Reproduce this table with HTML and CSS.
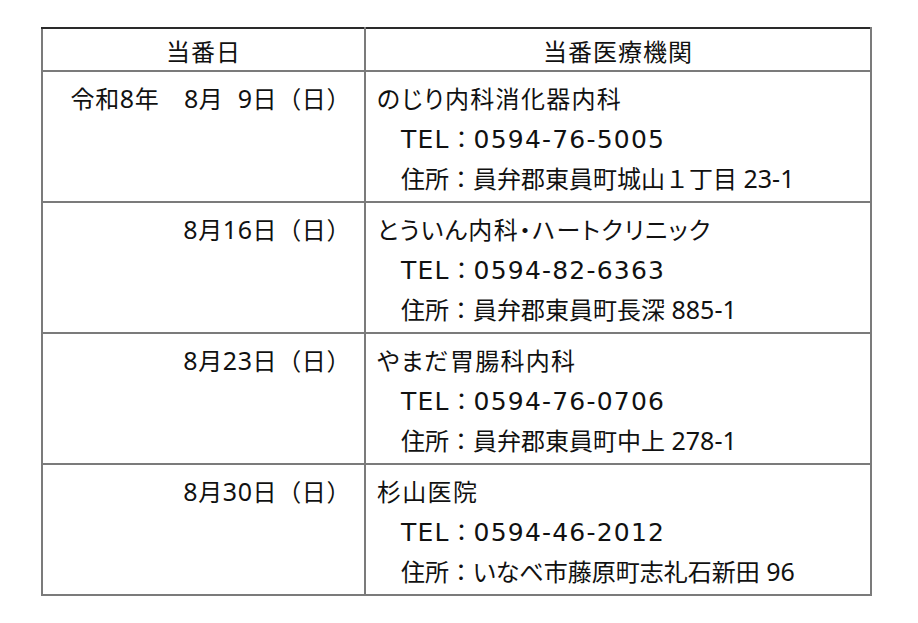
FILE: index.html
```html
<!DOCTYPE html>
<html lang="ja">
<head>
<meta charset="utf-8">
<title>当番医療機関</title>
<link rel="stylesheet" href="styles.css">
</head>
<body>
<table class="schedule">
  <colgroup>
    <col class="col-date">
    <col class="col-info">
  </colgroup>
  <thead>
    <tr>
      <th>当番日</th>
      <th>当番医療機関</th>
    </tr>
  </thead>
  <tbody>
    <tr>
      <td class="date">令和<span class="lat">8</span>年<span class="fw">　</span><span class="lat">8</span>月<span class="lat">&nbsp;&nbsp;9</span>日<span class="fw">（</span>日<span class="fw">）</span></td>
      <td class="info">
        <div class="name">のじり内科消化器内科</div>
        <div class="sub"><span class="lat tel">TEL</span><span class="fw">：</span><span class="lat tel">0594-76-5005</span></div>
        <div class="sub">住所<span class="fw">：</span>員弁郡東員町城山<span class="fw">１</span>丁目<span class="lat"> 23-1</span></div>
      </td>
    </tr>
    <tr>
      <td class="date"><span class="lat">8</span>月<span class="lat">16</span>日<span class="fw">（</span>日<span class="fw">）</span></td>
      <td class="info">
        <div class="name">とういん内科・ハートクリニック</div>
        <div class="sub"><span class="lat tel">TEL</span><span class="fw">：</span><span class="lat tel">0594-82-6363</span></div>
        <div class="sub">住所<span class="fw">：</span>員弁郡東員町長深<span class="lat"> 885-1</span></div>
      </td>
    </tr>
    <tr>
      <td class="date"><span class="lat">8</span>月<span class="lat">23</span>日<span class="fw">（</span>日<span class="fw">）</span></td>
      <td class="info">
        <div class="name">やまだ胃腸科内科</div>
        <div class="sub"><span class="lat tel">TEL</span><span class="fw">：</span><span class="lat tel">0594-76-0706</span></div>
        <div class="sub">住所<span class="fw">：</span>員弁郡東員町中上<span class="lat"> 278-1</span></div>
      </td>
    </tr>
    <tr>
      <td class="date"><span class="lat">8</span>月<span class="lat">30</span>日<span class="fw">（</span>日<span class="fw">）</span></td>
      <td class="info">
        <div class="name">杉山医院</div>
        <div class="sub"><span class="lat tel">TEL</span><span class="fw">：</span><span class="lat tel">0594-46-2012</span></div>
        <div class="sub">住所<span class="fw">：</span>いなべ市藤原町志礼石新田<span class="lat"> 96</span></div>
      </td>
    </tr>
  </tbody>
</table>
</body>
</html>
```

FILE: styles.css
```css
html, body {
  margin: 0;
  padding: 0;
  background: #ffffff;
}

body {
  font-family: "Noto Sans CJK JP", "Noto Sans", sans-serif;
  font-size: 24px;
  color: #111111;
}

.schedule {
  border-collapse: collapse;
  table-layout: fixed;
  width: 829px;
  margin: 27px 0 0 41px;
}

.col-date {
  width: 323px;
}

.col-info {
  width: 506px;
}

.schedule th,
.schedule td {
  border: 2px solid #7b7b7b;
  padding: 0;
  font-weight: normal;
}

.schedule thead th {
  border-top-color: #2a2a2a;
  height: 39px;
  padding-top: 2px;
  line-height: 38px;
  letter-spacing: 1px;
  text-align: center;
  vertical-align: middle;
}

.schedule td {
  vertical-align: top;
  line-height: 40px;
  height: 120px;
  font-feature-settings: "palt";
}

.date {
  text-align: right;
  padding: 6px 13px 3px 0 !important;
  white-space: nowrap;
  letter-spacing: 0.6px;
}

.info {
  padding: 6px 10px 3px 11px !important;
}

.name {
  letter-spacing: 1.3px;
  white-space: nowrap;
}

.sub {
  padding-left: 24px;
  white-space: nowrap;
  letter-spacing: 0;
}

.fw {
  font-feature-settings: normal;
}

.lat {
  font-family: "Noto Sans", "DejaVu Sans", sans-serif;
  font-size: 25px;
  line-height: 1;
}

.tel {
  font-family: "DejaVu Sans", "Noto Sans", sans-serif;
  letter-spacing: 1.2px;
}
```
